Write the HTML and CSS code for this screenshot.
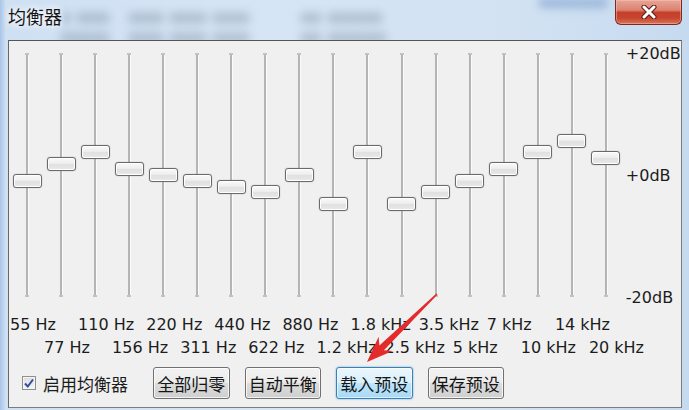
FILE: index.html
```html
<!DOCTYPE html>
<html lang="zh-CN">
<head>
    <meta charset="UTF-8">
    <title>均衡器</title>
    <link rel="stylesheet" href="styles.css">
</head>
<body>
<div class="window">
    <!-- blurred desktop content seen through the glass frame -->
    <div class="behind">
        <div class="smear-row">
            <i style="width:16px;margin-left:55px"></i><i style="width:34px"></i>
            <i style="width:36px;margin-left:13px"></i><i style="width:38px"></i><i style="width:38px"></i>
            <i style="width:22px;margin-left:45px"></i><i style="width:56px"></i>
            <i class="deep" style="width:70px;margin-left:150px"></i>
        </div>
        <div class="smear-row">
            <i style="width:50px;margin-left:60px"></i>
            <i style="width:36px;margin-left:13px"></i><i style="width:38px"></i><i style="width:38px"></i>
            <i style="width:22px;margin-left:45px"></i><i style="width:60px"></i>
        </div>
    </div>

    <div class="titlebar">
        <span class="title">均衡器</span>
        <button class="close" title="关闭">
            <svg width="18" height="14" viewBox="0 0 18 14">
                <path d="M4 2 L14 12 M14 2 L4 12" stroke="#5e1a12" stroke-width="5" stroke-linecap="round"/>
                <path d="M4 2 L14 12 M14 2 L4 12" stroke="#fff" stroke-width="3" stroke-linecap="round"/>
            </svg>
        </button>
    </div>

    <div class="panel">
        <div class="eq">
            <div class="bands">
                <div class="band" style="--db:-1"><div class="track"></div><div class="thumb"></div></div>
                <div class="band" style="--db:2"><div class="track"></div><div class="thumb"></div></div>
                <div class="band" style="--db:4"><div class="track"></div><div class="thumb"></div></div>
                <div class="band" style="--db:1"><div class="track"></div><div class="thumb"></div></div>
                <div class="band" style="--db:0"><div class="track"></div><div class="thumb"></div></div>
                <div class="band" style="--db:-1"><div class="track"></div><div class="thumb"></div></div>
                <div class="band" style="--db:-2"><div class="track"></div><div class="thumb"></div></div>
                <div class="band" style="--db:-3"><div class="track"></div><div class="thumb"></div></div>
                <div class="band" style="--db:0"><div class="track"></div><div class="thumb"></div></div>
                <div class="band" style="--db:-5"><div class="track"></div><div class="thumb"></div></div>
                <div class="band" style="--db:4"><div class="track"></div><div class="thumb"></div></div>
                <div class="band" style="--db:-5"><div class="track"></div><div class="thumb"></div></div>
                <div class="band" style="--db:-3"><div class="track"></div><div class="thumb"></div></div>
                <div class="band" style="--db:-1"><div class="track"></div><div class="thumb"></div></div>
                <div class="band" style="--db:1"><div class="track"></div><div class="thumb"></div></div>
                <div class="band" style="--db:4"><div class="track"></div><div class="thumb"></div></div>
                <div class="band" style="--db:6"><div class="track"></div><div class="thumb"></div></div>
                <div class="band" style="--db:3"><div class="track"></div><div class="thumb"></div></div>
            </div>
            <div class="scale">
                <span>+20dB</span>
                <span>+0dB</span>
                <span>-20dB</span>
            </div>
        </div>

        <div class="freqs odd">
            <span>55 Hz</span><span>110 Hz</span><span>220 Hz</span><span>440 Hz</span><span>880 Hz</span>
            <span>1.8 kHz</span><span>3.5 kHz</span><span>7 kHz</span><span>14 kHz</span>
        </div>
        <div class="freqs even">
            <span>77 Hz</span><span>156 Hz</span><span>311 Hz</span><span>622 Hz</span><span>1.2 kHz</span>
            <span>2.5 kHz</span><span>5 kHz</span><span>10 kHz</span><span>20 kHz</span>
        </div>

        <div class="controls">
            <label class="check">
                <span class="box">
                    <svg width="12" height="12" viewBox="0 0 12 12">
                        <path d="M2 6.5 L4.8 9.5 L10 2.5" fill="none" stroke="#2d4f9e" stroke-width="2"/>
                    </svg>
                </span>
                启用均衡器
            </label>
            <button class="btn">全部归零</button>
            <button class="btn">自动平衡</button>
            <button class="btn hot">载入预设</button>
            <button class="btn">保存预设</button>
        </div>

        <!-- red pointer drawn over the panel -->
        <svg class="arrow" viewBox="8 40 674 368" width="674" height="368">
            <polygon points="367,362 378.6,336.7 379.4,345.4 436.4,293.4 437.6,294.6 383.9,350.2 392.6,351.1" fill="#e42a2a"/>
        </svg>
    </div>
</div>
</body>
</html>
```

FILE: styles.css
```css
body {
    margin: 0;
    width: 689px;
    height: 410px;
    overflow: hidden;
    background: linear-gradient(to right, #a9c5e6 0px, #cfe0f3 6px, #d6e5f5 40%, #d2e2f3 75%, #c6daef 100%);
    font-family: "DejaVu Sans", "Noto Sans CJK SC", sans-serif;
    color: #1c1c1c;
}
.window {
    position: relative;
    height: 410px;
}
.behind {
    position: absolute;
    top: 0;
    left: 0;
    right: 0;
    height: 44px;
    padding-top: 12px;
    box-sizing: border-box;
}
.smear-row {
    display: flex;
    gap: 5px;
    height: 12px;
    margin-bottom: 8px;
}
.smear-row i {
    display: block;
    flex: none;
    background: rgba(95, 110, 130, 0.28);
    border-radius: 5px;
    filter: blur(4px);
}
.smear-row i.deep {
    margin-top: -14px;
    height: 10px;
    background: rgba(95, 135, 190, 0.45);
}
.titlebar {
    position: relative;
    height: 40px;
    display: flex;
    justify-content: space-between;
    align-items: flex-start;
    padding: 0 7px 0 8px;
    box-sizing: border-box;
}
.title {
    margin-top: 8px;
    font-size: 18px;
    line-height: 20px;
    color: #151515;
    text-shadow: 0 0 6px #fff, 0 0 10px #fff;
}
.close {
    width: 67px;
    height: 25px;
    padding: 0;
    display: flex;
    align-items: center;
    justify-content: center;
    border: 1px solid #7a2a1e;
    border-top: none;
    border-radius: 0 0 6px 6px;
    background: linear-gradient(#e8a597 0%, #db8371 42%, #c5402a 52%, #c6452e 75%, #d9755c 100%);
    box-shadow: inset 0 0 0 1px rgba(255, 200, 190, 0.45);
}
.panel {
    position: relative;
    margin: 0 7px 0 8px;
    height: 368px;
    box-sizing: border-box;
    border: 1px solid #7c7c7c;
    border-top-color: #555;
    border-left-color: #666;
    background: #f0f0f0;
}
.eq {
    display: flex;
    padding-top: 3px;
}
.bands {
    display: flex;
    padding-left: 1px;
    padding-top: 9px;
}
.band {
    position: relative;
    flex: none;
    width: 34.06px;
    height: 244px;
}
.track {
    position: absolute;
    top: 0;
    bottom: 0;
    left: 50%;
    width: 2px;
    margin-left: -1px;
    background: #b4b4b4;
    box-shadow: 1px 0 0 #fbfbfb;
}
/* small end ticks */
.track::before, .track::after {
    content: "";
    position: absolute;
    left: -1px;
    width: 4px;
    height: 2px;
    background: #c2c2c2;
}
.track::before { top: 0; }
.track::after { bottom: 0; }
.thumb {
    position: absolute;
    left: 50%;
    top: calc(115px - var(--db) * 5.75px);
    width: 29px;
    height: 14px;
    margin-left: -14.5px;
    box-sizing: border-box;
    border: 1px solid #6a6a6a;
    border-radius: 3px;
    background: linear-gradient(#fafafa 0%, #eeeeee 45%, #e0e0e0 55%, #e9e9e9 100%);
    box-shadow: inset 0 0 0 1px #fff, 0 0 1px rgba(0, 0, 0, 0.45);
}
.scale {
    margin-left: 3px;
    width: 55px;
    height: 264px;
    display: flex;
    flex-direction: column;
    justify-content: space-between;
    font-size: 16px;
    line-height: 20px;
    white-space: nowrap;
}
.freqs {
    display: flex;
    font-size: 16px;
    line-height: 23px;
    white-space: nowrap;
}
.freqs span {
    flex: none;
    width: 68.12px;
}
.freqs.odd {
    margin-top: 5px;
    padding-left: 1px;
}
.freqs.even {
    padding-left: 35px;
}
.controls {
    display: flex;
    align-items: center;
    height: 32px;
    margin-top: 8px;
    padding-left: 13px;
}
.check {
    display: flex;
    align-items: center;
    gap: 7px;
    margin-right: 25px;
    font-size: 17px;
}
.box {
    width: 14px;
    height: 14px;
    box-sizing: border-box;
    border: 1px solid #8e8f8f;
    background: linear-gradient(#dcdcdc, #f6f6f6);
    box-shadow: inset 0 0 0 1px #f4f4f4;
    display: flex;
    align-items: center;
    justify-content: center;
}
.btn {
    flex: none;
    width: 76.5px;
    height: 32px;
    margin-right: 15px;
    padding: 0;
    font-family: "DejaVu Sans", "Noto Sans CJK SC", sans-serif;
    font-size: 17px;
    color: #151515;
    border: 1px solid #707070;
    border-radius: 3px;
    background: linear-gradient(#f2f2f2 0%, #ebebeb 50%, #dddddd 51%, #cfcfcf 100%);
    box-shadow: inset 0 0 0 1px rgba(255, 255, 255, 0.75);
}
.btn.hot {
    border-color: #3c7fb1;
    background: linear-gradient(#eaf6fd 0%, #d9f0fc 50%, #bee6fd 51%, #a7d9f5 100%);
    box-shadow: inset 0 0 0 1px rgba(255, 255, 255, 0.6), 0 0 2px #5aa6dc;
}
.arrow {
    position: absolute;
    top: -1px;
    left: -1px;
    pointer-events: none;
}
```
